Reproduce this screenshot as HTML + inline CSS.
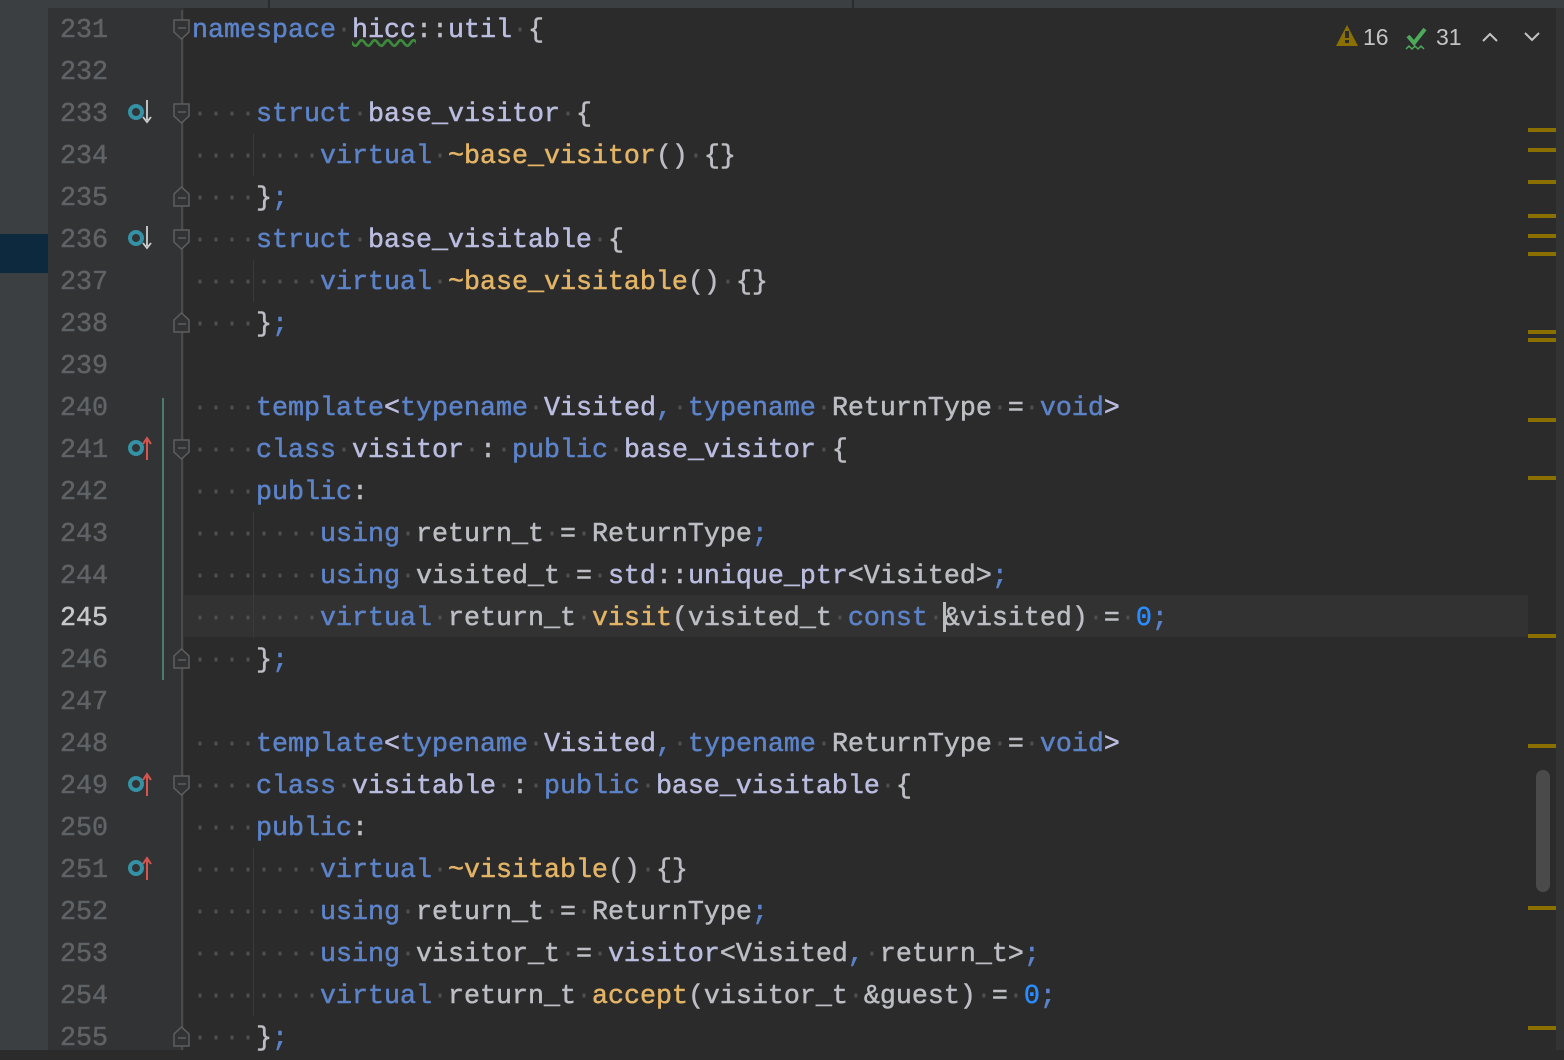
<!DOCTYPE html>
<html><head><meta charset="utf-8"><style>
*{margin:0;padding:0;box-sizing:border-box}
body{width:1564px;height:1050px;overflow:hidden;background:#2b2b2b;position:relative;font-family:"Liberation Mono",monospace;font-size:26.67px}
#side{position:absolute;left:0;top:0;width:48px;height:1050px;background:#3c3f41}
#sel{position:absolute;left:0;top:234px;width:48px;height:39px;background:#0d293e}
#gut{position:absolute;left:48px;top:0;width:136px;height:1050px;background:#313335}
#tabs{position:absolute;left:48px;top:0;width:1516px;height:8px;background:#3c3f41}
.ln{position:absolute;left:48px;width:60px;text-align:right;height:42px;line-height:42px;padding-top:3px;color:#5f6366;-webkit-text-stroke:0.5px #5f6366}
.code{position:absolute;left:192px;height:42px;line-height:42px;padding-top:3px;white-space:pre;color:#bcbec4;-webkit-text-stroke:0.5px currentColor}
.k{color:#5c82c8}.t{color:#bbbde0}.f{color:#e3b466}.n{color:#2b8cff}.d{color:#4e4f52;-webkit-text-stroke:0}
.cur{position:absolute;left:184px;top:595px;width:1344px;height:42px;background:#323232}
.ig{position:absolute;width:1px;background:#3a3a3a}
.mk{position:absolute;left:1528px;width:28px;height:4px;background:#8a7000}
</style></head><body>
<div id="side"></div><div id="sel"></div><div id="gut"></div>
<div id="tabs"></div>
<div style="position:absolute;left:268px;top:0;width:2px;height:8px;background:#2b2b2b"></div>
<div style="position:absolute;left:852px;top:0;width:2px;height:8px;background:#2b2b2b"></div>
<div class="cur"></div>
<div style="position:absolute;left:1556px;top:8px;width:8px;height:1042px;background:#313335"></div>
<div style="position:absolute;left:181px;top:10px;width:2px;height:1040px;background:#4a4a4a"></div>
<div style="position:absolute;left:162px;top:398px;width:2px;height:282px;background:#4b7a6e"></div>
<div class="ig" style="left:253px;top:134px;height:42px"></div>
<div class="ig" style="left:253px;top:260px;height:42px"></div>
<div class="ig" style="left:253px;top:512px;height:126px"></div>
<div class="ig" style="left:253px;top:848px;height:168px"></div>

<div class="ln" style="top:7px">231</div><div class="ln" style="top:49px">232</div><div class="ln" style="top:91px">233</div><div class="ln" style="top:133px">234</div><div class="ln" style="top:175px">235</div><div class="ln" style="top:217px">236</div><div class="ln" style="top:259px">237</div><div class="ln" style="top:301px">238</div><div class="ln" style="top:343px">239</div><div class="ln" style="top:385px">240</div><div class="ln" style="top:427px">241</div><div class="ln" style="top:469px">242</div><div class="ln" style="top:511px">243</div><div class="ln" style="top:553px">244</div><div class="ln" style="top:595px;color:#c8c8c8;-webkit-text-stroke:0.5px #c8c8c8">245</div><div class="ln" style="top:637px">246</div><div class="ln" style="top:679px">247</div><div class="ln" style="top:721px">248</div><div class="ln" style="top:763px">249</div><div class="ln" style="top:805px">250</div><div class="ln" style="top:847px">251</div><div class="ln" style="top:889px">252</div><div class="ln" style="top:931px">253</div><div class="ln" style="top:973px">254</div><div class="ln" style="top:1015px">255</div>

<div class="code" style="top:7px"><span class="k">namespace</span><span class="d">·</span><span class="t" style="text-decoration:underline wavy #3d8a3d">hicc</span>::<span class="t">util</span><span class="d">·</span>{</div>
<div class="code" style="top:91px"><span class="d">····</span><span class="k">struct</span><span class="d">·</span><span class="t">base_visitor</span><span class="d">·</span>{</div>
<div class="code" style="top:133px"><span class="d">········</span><span class="k">virtual</span><span class="d">·</span><span class="f">~base_visitor</span>()<span class="d">·</span>{}</div>
<div class="code" style="top:175px"><span class="d">····</span>}<span class="k">;</span></div>
<div class="code" style="top:217px"><span class="d">····</span><span class="k">struct</span><span class="d">·</span><span class="t">base_visitable</span><span class="d">·</span>{</div>
<div class="code" style="top:259px"><span class="d">········</span><span class="k">virtual</span><span class="d">·</span><span class="f">~base_visitable</span>()<span class="d">·</span>{}</div>
<div class="code" style="top:301px"><span class="d">····</span>}<span class="k">;</span></div>
<div class="code" style="top:385px"><span class="d">····</span><span class="k">template</span><span class="t">&lt;</span><span class="k">typename</span><span class="d">·</span><span class="t">Visited</span><span class="k">,</span><span class="d">·</span><span class="k">typename</span><span class="d">·</span>ReturnType<span class="d">·</span>=<span class="d">·</span><span class="k">void</span><span class="t">&gt;</span></div>
<div class="code" style="top:427px"><span class="d">····</span><span class="k">class</span><span class="d">·</span><span class="t">visitor</span><span class="d">·</span>:<span class="d">·</span><span class="k">public</span><span class="d">·</span><span class="t">base_visitor</span><span class="d">·</span>{</div>
<div class="code" style="top:469px"><span class="d">····</span><span class="k">public</span>:</div>
<div class="code" style="top:511px"><span class="d">········</span><span class="k">using</span><span class="d">·</span>return_t<span class="d">·</span>=<span class="d">·</span>ReturnType<span class="k">;</span></div>
<div class="code" style="top:553px"><span class="d">········</span><span class="k">using</span><span class="d">·</span>visited_t<span class="d">·</span>=<span class="d">·</span><span class="t">std</span>::<span class="t">unique_ptr</span>&lt;Visited&gt;<span class="k">;</span></div>
<div class="code" style="top:595px"><span class="d">········</span><span class="k">virtual</span><span class="d">·</span>return_t<span class="d">·</span><span class="f">visit</span>(visited_t<span class="d">·</span><span class="k">const</span><span class="d">·</span>&amp;visited)<span class="d">·</span>=<span class="d">·</span><span class="n">0</span><span class="k">;</span></div>
<div style="position:absolute;left:943px;top:602px;width:3px;height:30px;background:#bbbbbb"></div>
<div class="code" style="top:637px"><span class="d">····</span>}<span class="k">;</span></div>
<div class="code" style="top:721px"><span class="d">····</span><span class="k">template</span><span class="t">&lt;</span><span class="k">typename</span><span class="d">·</span><span class="t">Visited</span><span class="k">,</span><span class="d">·</span><span class="k">typename</span><span class="d">·</span>ReturnType<span class="d">·</span>=<span class="d">·</span><span class="k">void</span><span class="t">&gt;</span></div>
<div class="code" style="top:763px"><span class="d">····</span><span class="k">class</span><span class="d">·</span><span class="t">visitable</span><span class="d">·</span>:<span class="d">·</span><span class="k">public</span><span class="d">·</span><span class="t">base_visitable</span><span class="d">·</span>{</div>
<div class="code" style="top:805px"><span class="d">····</span><span class="k">public</span>:</div>
<div class="code" style="top:847px"><span class="d">········</span><span class="k">virtual</span><span class="d">·</span><span class="f">~visitable</span>()<span class="d">·</span>{}</div>
<div class="code" style="top:889px"><span class="d">········</span><span class="k">using</span><span class="d">·</span>return_t<span class="d">·</span>=<span class="d">·</span>ReturnType<span class="k">;</span></div>
<div class="code" style="top:931px"><span class="d">········</span><span class="k">using</span><span class="d">·</span>visitor_t<span class="d">·</span>=<span class="d">·</span><span class="t">visitor</span>&lt;Visited<span class="k">,</span><span class="d">·</span>return_t&gt;<span class="k">;</span></div>
<div class="code" style="top:973px"><span class="d">········</span><span class="k">virtual</span><span class="d">·</span>return_t<span class="d">·</span><span class="f">accept</span>(visitor_t<span class="d">·</span>&amp;guest)<span class="d">·</span>=<span class="d">·</span><span class="n">0</span><span class="k">;</span></div>
<div class="code" style="top:1015px"><span class="d">····</span>}<span class="k">;</span></div>

<svg width="1564" height="1050" style="position:absolute;left:0;top:0">
<defs>
<g id="fd"><path d="M174 -10 h15 v12 l-7.5 7 l-7.5 -7z" fill="#313335" stroke="#5e5e5e" stroke-width="1.5"/><path d="M178 -2 h8" stroke="#5e5e5e" stroke-width="1.5"/></g>
<g id="fu"><path d="M174 10 h15 v-12 l-7.5 -7 l-7.5 7z" fill="#313335" stroke="#5e5e5e" stroke-width="1.5"/><path d="M178 2 h8" stroke="#5e5e5e" stroke-width="1.5"/></g>
<g id="od"><circle cx="136" cy="0" r="6" fill="none" stroke="#3592a6" stroke-width="4"/><path d="M147 -12 v20 M143 5 l4 5 l4 -5" stroke="#cfcfcf" stroke-width="1.8" fill="none"/></g>
<g id="ou"><circle cx="136" cy="0" r="6" fill="none" stroke="#3592a6" stroke-width="4"/><path d="M147 12 v-20 M143 -4 l4 -6 l4 6" stroke="#d9534f" stroke-width="2" fill="none"/></g>
</defs>
<use href="#fd" y="30"/><use href="#fd" y="114"/><use href="#fu" y="196"/><use href="#fd" y="240"/><use href="#fu" y="322"/><use href="#fd" y="450"/><use href="#fu" y="658"/><use href="#fd" y="786"/><use href="#fu" y="1036"/>
<use href="#od" y="112"/><use href="#od" y="238"/><use href="#ou" y="448"/><use href="#ou" y="784"/><use href="#ou" y="868"/>
<path d="M1347 25 l-11 21 h22z" fill="#8a7000"/><rect x="1345" y="31" width="4" height="7" fill="#2b2b2b"/><rect x="1345" y="40" width="4" height="3" fill="#2b2b2b"/>
<path d="M1408 36 l6 7 l11 -14" stroke="#4caa5a" stroke-width="4" fill="none"/><path d="M1406 49 l3 -3 l3 3 l3 -3 l3 3 l3 -3 l3 3" stroke="#4caa5a" stroke-width="1.5" fill="none"/>
<path d="M1483 41 l7 -7 l7 7" stroke="#c4c4c4" stroke-width="2" fill="none"/>
<path d="M1525 33 l7 7 l7 -7" stroke="#c4c4c4" stroke-width="2" fill="none"/>
<text x="1363" y="45" font-family="Liberation Sans" font-size="23" fill="#c4c4c4">16</text>
<text x="1436" y="45" font-family="Liberation Sans" font-size="23" fill="#c4c4c4">31</text>
<rect x="1536" y="770" width="14" height="122" rx="7" fill="#4a4a4a"/>
</svg>
<div class="mk" style="top:128px"></div><div class="mk" style="top:148px"></div><div class="mk" style="top:180px"></div><div class="mk" style="top:214px"></div><div class="mk" style="top:234px"></div><div class="mk" style="top:252px"></div><div class="mk" style="top:330px"></div><div class="mk" style="top:338px"></div><div class="mk" style="top:418px"></div><div class="mk" style="top:476px"></div><div class="mk" style="top:634px"></div><div class="mk" style="top:744px"></div><div class="mk" style="top:906px"></div><div class="mk" style="top:1026px"></div>
</body></html>
